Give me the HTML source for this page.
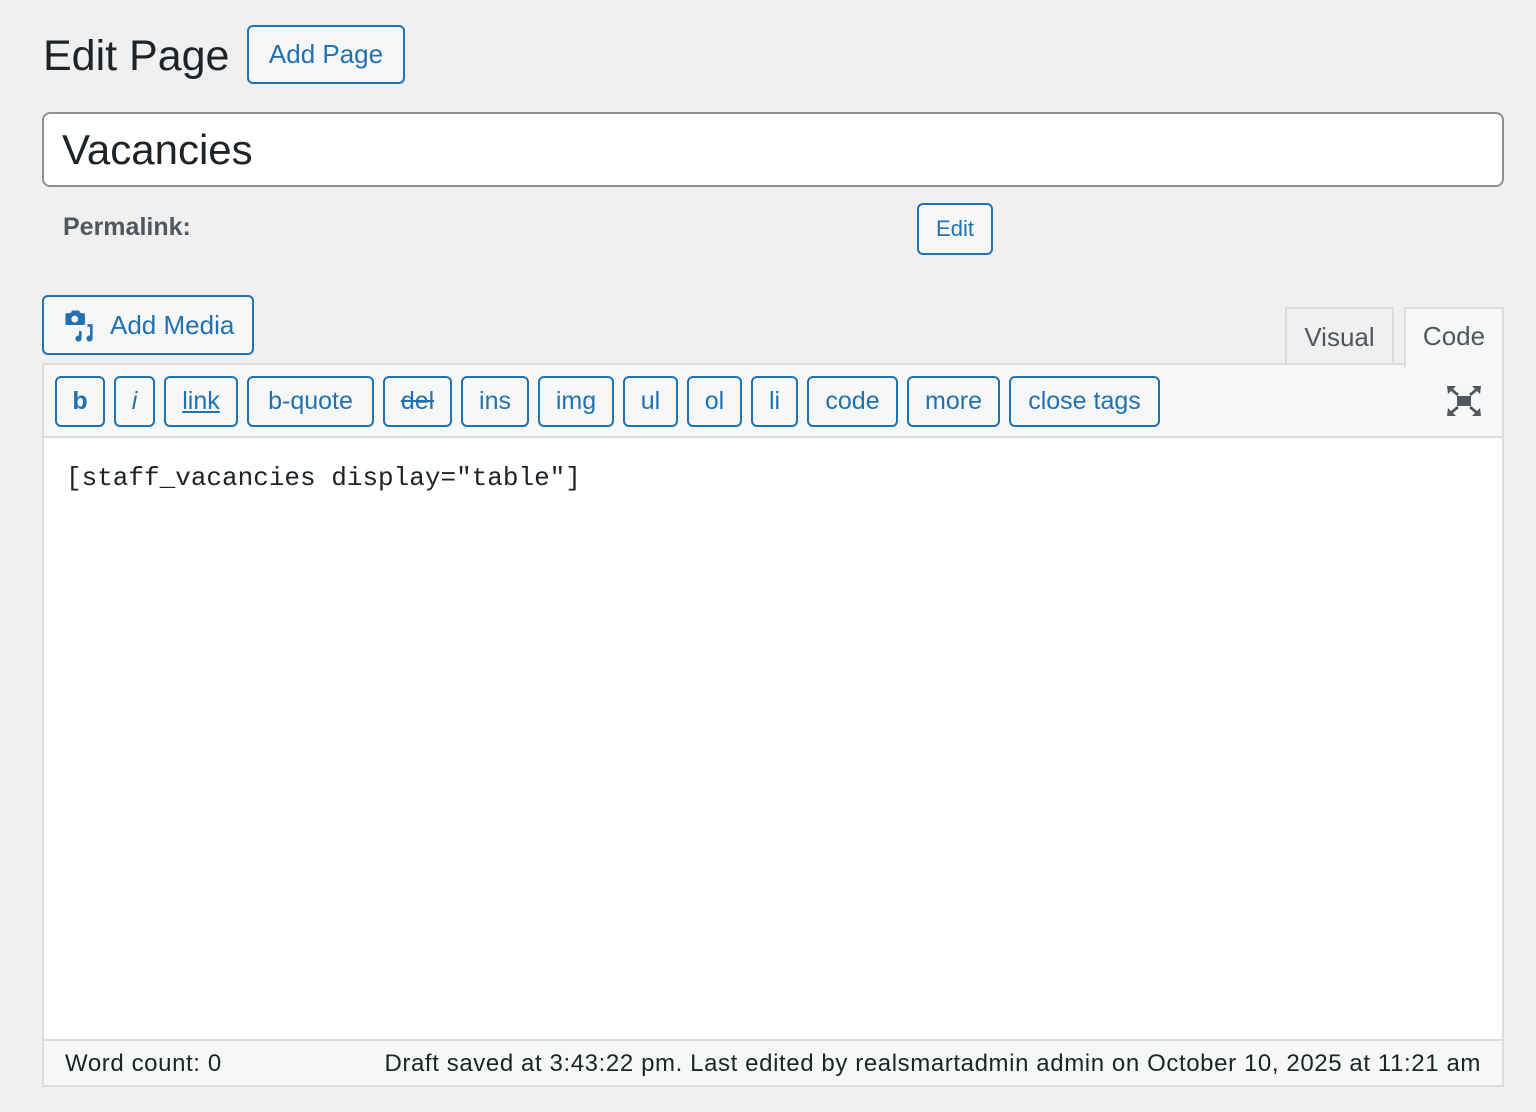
<!DOCTYPE html>
<html><head><style>
*{box-sizing:border-box;margin:0;padding:0}
body{width:1536px;height:1112px;background:#f0f0f1;font-family:"Liberation Sans",sans-serif;color:#1d2327;position:relative;overflow:hidden}
.a{position:absolute}
.btn{position:absolute;border:2px solid #2271b1;border-radius:6px;background:#f6f7f7;color:#2271b1;display:flex;align-items:center;justify-content:center;font-size:25px}
</style></head><body>
<div class="a" style="left:43px;top:29px;font-size:43px;line-height:54px">Edit Page</div>
<div class="btn" style="left:247px;top:25px;width:158px;height:59px;font-size:26px">Add Page</div>
<div class="a" style="left:42px;top:112px;width:1462px;height:75px;border:2px solid #8c8f94;border-radius:8px;background:#fff;font-size:42px;padding-left:18px;line-height:71px">Vacancies</div>
<div class="a" style="left:63px;top:213px;font-size:25px;font-weight:bold;color:#50575e">Permalink:</div>
<div class="btn" style="left:917px;top:203px;width:76px;height:52px;font-size:22px">Edit</div>
<div class="btn" style="left:42px;top:295px;width:212px;height:60px;font-size:26px;justify-content:flex-start;padding-left:18px">
<svg width="34" height="34" viewBox="0 0 20 20" style="margin-right:14px"><path fill="#2271b1" d="M3 3h2l1-1.5h4L11 3h1.5a1 1 0 0 1 1 1v5a1 1 0 0 1-1 1H3a1 1 0 0 1-1-1V4a1 1 0 0 1 1-1zm4.5 1.5a2 2 0 1 0 0 4 2 2 0 1 0 0-4zM15 9.5h3v8.5a1.8 1.8 0 1 1-1.5-1.8V11H15zM10 13.5h1.5v4.5a1.8 1.8 0 1 1-1.5-1.8z"/></svg>Add Media</div>
<div class="a" style="left:1285px;top:307px;width:109px;height:58px;border:2px solid #dcdcde;border-bottom:none;background:#f0f0f1;color:#50575e;font-size:26px;display:flex;align-items:center;justify-content:center">Visual</div>
<div class="a" style="left:42px;top:363px;width:1462px;height:724px;border:2px solid #dcdcde;background:#fff"></div>
<div class="a" style="left:44px;top:365px;width:1458px;height:73px;background:#f6f7f7;border-bottom:2px solid #dcdcde"></div>
<div class="a" style="left:1404px;top:307px;width:100px;height:60px;border:2px solid #dcdcde;border-bottom:none;background:#f6f7f7;color:#50575e;font-size:26px;display:flex;align-items:center;justify-content:center;padding-bottom:4px">Code</div>
<div class="btn" style="left:55px;top:376px;width:50px;height:51px;font-weight:bold">b</div>
<div class="btn" style="left:114px;top:376px;width:41px;height:51px;font-style:italic">i</div>
<div class="btn" style="left:164px;top:376px;width:74px;height:51px;text-decoration:underline">link</div>
<div class="btn" style="left:247px;top:376px;width:127px;height:51px">b-quote</div>
<div class="btn" style="left:383px;top:376px;width:69px;height:51px;text-decoration:line-through">del</div>
<div class="btn" style="left:461px;top:376px;width:68px;height:51px">ins</div>
<div class="btn" style="left:538px;top:376px;width:76px;height:51px">img</div>
<div class="btn" style="left:623px;top:376px;width:55px;height:51px">ul</div>
<div class="btn" style="left:687px;top:376px;width:55px;height:51px">ol</div>
<div class="btn" style="left:751px;top:376px;width:47px;height:51px">li</div>
<div class="btn" style="left:807px;top:376px;width:91px;height:51px">code</div>
<div class="btn" style="left:907px;top:376px;width:93px;height:51px">more</div>
<div class="btn" style="left:1009px;top:376px;width:151px;height:51px">close tags</div>
<svg class="a" style="left:1447px;top:386px" width="34" height="30" viewBox="0 0 34 30"><g fill="#50575e"><rect x="10" y="10" width="14" height="10"/><path d="M0 0h9l-3 3 6 5-2 2-6-5-3 3z"/><path d="M34 0h-9l3 3-6 5 2 2 6-5 3 3z"/><path d="M0 30h9l-3-3 6-5-2-2-6 5-3-3z"/><path d="M34 30h-9l3-3-6-5 2-2 6 5 3-3z"/></g></svg>
<div class="a" style="left:66px;top:462px;font-family:'Liberation Mono',monospace;font-size:26px;line-height:32px">[staff_vacancies display="table"]</div>
<div class="a" style="left:44px;top:1039px;width:1458px;height:46px;background:#f6f7f7;border-top:2px solid #dcdcde;font-size:24px;letter-spacing:0.6px;color:#1d2327;line-height:46px">
<span style="position:absolute;left:21px">Word count: 0</span>
<span style="position:absolute;right:21px">Draft saved at 3:43:22 pm. Last edited by realsmartadmin admin on October 10, 2025 at 11:21 am</span></div>
</body></html>
